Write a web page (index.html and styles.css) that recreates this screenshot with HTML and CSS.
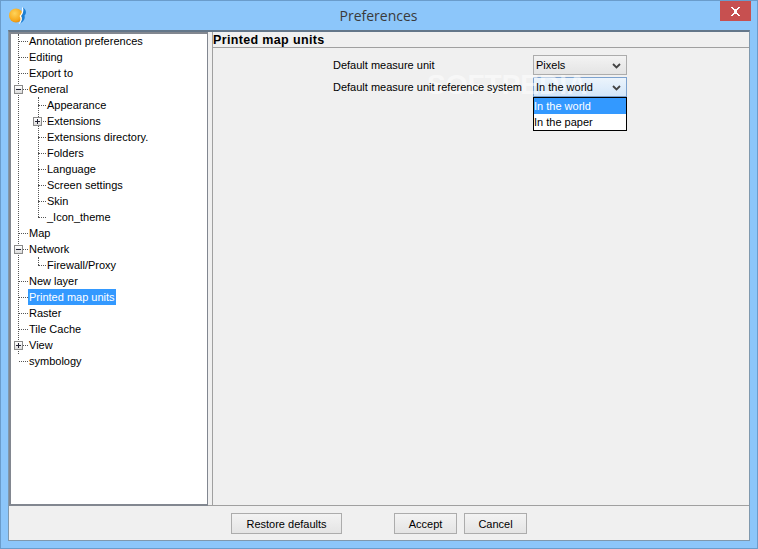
FILE: index.html
```html
<!DOCTYPE html>
<html lang="en">
<head>
<meta charset="utf-8">
<title>Preferences</title>
<link rel="stylesheet" href="styles.css">
</head>
<body>
<div class="window">
  <header class="titlebar">
    <svg class="app-icon" width="18" height="17" viewBox="0 0 18 17">
      <defs>
        <radialGradient id="orb" cx="40%" cy="35%" r="70%">
          <stop offset="0" stop-color="#ffd45a"/>
          <stop offset="0.7" stop-color="#f7aa1e"/>
          <stop offset="1" stop-color="#e08a10"/>
        </radialGradient>
      </defs>
      <circle cx="7" cy="8.500" r="7" fill="url(#orb)"/>
      <path d="M14 .5 C17.500 3 17.800 6.500 15.500 8.500 C16.500 11.500 14.500 15 11 16.500 C13 13.500 13.500 11 12 9 C14 7 14.800 4 14 .5Z" fill="#1b7fd4"/>
      <path d="M13 .5 L14 .5 C14.800 4 14 7 12 9 C13.500 11 13 13.500 11 16.500 L9.500 16.800 C12 14 12 11 10.500 9 C12.800 7 13.500 4 13 .5Z" fill="#fff"/>
    </svg>
    <h1 class="title">Preferences</h1>
    <button class="close" aria-label="Close">
      <svg width="11" height="9" viewBox="0 0 11 9"><path d="M1 0h2v1h1v1h3V1h1V0h2v1H9v1H8v1H7v3h1v1h1v1h1v1H8V8H7V7H4v1H3v1H1V8h1V7h1V6h1V3H3V2H2V1H1Z" fill="#fff"/></svg>
    </button>
  </header>
  <main class="client">
    <div class="panes">
      <nav class="tree">
        <ul class="nodes root">
          <li class="node"><span class="label">Annotation preferences</span></li>
          <li class="node"><span class="label">Editing</span></li>
          <li class="node"><span class="label">Export to</span></li>
          <li class="node"><i class="toggle minus"></i><span class="label">General</span></li>
          <li>
            <ul class="nodes sub long">
              <li class="node"><span class="label">Appearance</span></li>
              <li class="node"><i class="toggle plus"></i><span class="label">Extensions</span></li>
              <li class="node"><span class="label">Extensions directory.</span></li>
              <li class="node"><span class="label">Folders</span></li>
              <li class="node"><span class="label">Language</span></li>
              <li class="node"><span class="label">Screen settings</span></li>
              <li class="node"><span class="label">Skin</span></li>
              <li class="node"><span class="label">_Icon_theme</span></li>
            </ul>
          </li>
          <li class="node"><span class="label">Map</span></li>
          <li class="node"><i class="toggle minus"></i><span class="label">Network</span></li>
          <li>
            <ul class="nodes sub">
              <li class="node"><span class="label">Firewall/Proxy</span></li>
            </ul>
          </li>
          <li class="node"><span class="label">New layer</span></li>
          <li class="node"><span class="label selected">Printed map units</span></li>
          <li class="node"><span class="label">Raster</span></li>
          <li class="node"><span class="label">Tile Cache</span></li>
          <li class="node"><i class="toggle plus"></i><span class="label">View</span></li>
          <li class="node"><span class="label">symbology</span></li>
        </ul>
      </nav>
      <section class="page">
        <h2 class="page-title">Printed map units</h2>
        <div class="form">
          <div class="field">
            <span class="field-label">Default measure unit</span>
            <div class="combo"><span class="combo-text">Pixels</span><svg class="chev" width="9" height="6" viewBox="0 0 9 6"><path d="M1 1l3.500 3.500L8 1" fill="none" stroke="#444" stroke-width="1.800"/></svg></div>
          </div>
          <div class="field">
            <span class="field-label">Default measure unit reference system</span>
            <div class="combo open"><span class="combo-text">In the world</span><svg class="chev" width="9" height="6" viewBox="0 0 9 6"><path d="M1 1l3.500 3.500L8 1" fill="none" stroke="#444" stroke-width="1.800"/></svg>
              <ul class="popup">
                <li class="option active">In the world</li>
                <li class="option">In the paper</li>
              </ul>
            </div>
          </div>
          <span class="watermark">SOFTPEDIA</span>
        </div>
      </section>
    </div>
    <footer class="actions">
      <button class="btn restore">Restore defaults</button>
      <button class="btn accept">Accept</button>
      <button class="btn">Cancel</button>
    </footer>
  </main>
</div>
</body>
</html>
```
FILE: styles.css
```css
* { box-sizing: border-box; }
html, body { margin: 0; padding: 0; }
body { width: 758px; height: 549px; overflow: hidden; font: 11px/16px "Liberation Sans", sans-serif; color: #000; }
ul { list-style: none; margin: 0; padding: 0; }

.window {
  width: 758px; height: 549px;
  display: flex; flex-direction: column;
  background: #8cc6fa;
  border: 1px solid #6a9ccb;
  padding: 0 7px 7px;
}
.titlebar { height: 29px; flex: none; display: flex; align-items: flex-start; position: relative; }
.app-icon { position: absolute; left: 1px; top: 6px; }
.title { margin: 0; flex: 1; text-align: center; font: 400 14px/30px "Open Sans", sans-serif; color: #3a3a3a; padding-right: 1px; }
.close {
  position: absolute; right: -1px; top: 0;
  width: 31px; height: 20px;
  border: 0; padding: 0; background: #c75050;
  display: flex; align-items: center; justify-content: center;
}

.client {
  flex: 1; min-height: 0;
  display: flex; flex-direction: column;
  background: #f0f0f0;
  border: 1px solid #7f98ad;
  border-top: 2px solid #64778a;
}
.panes { flex: 1; min-height: 0; display: flex; border-bottom: 1px solid #a0a0a0; }
.tree {
  width: 199px; height: 474px; flex: none;
  background: #fff;
  border: 2px solid #828790;
  border-right-width: 1px; border-top-width: 2px;
}

.nodes { position: relative; }
.root { padding-left: 17px; margin-top: -1px; }
.root::before, .sub::before {
  content: ""; position: absolute; top: 0; width: 0;
  border-left: 1px dotted #555;
}
.root::before { left: 7px; top: 1px; height: 320px; }
.sub { padding-left: 18px; }
.sub::before { left: 10px; height: 8px; }
.sub.long::before { height: 120px; }
.node { position: relative; height: 16px; }
.node::before {
  content: ""; position: absolute; left: -9px; top: 8px; width: 9px;
  border-top: 1px dotted #555;
}
.sub .node::before { left: -8px; width: 8px; }
.label { display: inline-block; padding: 0 1px; height: 16px; white-space: nowrap; position: relative; }
.selected { background: #3399ff; color: #fff; }
.toggle {
  position: absolute; left: -14px; top: 4px; z-index: 1;
  width: 9px; height: 9px;
  background: linear-gradient(#fff, #dcdcdc);
  border: 1px solid #8a8a8a;
}
.sub .toggle { left: -13px; }
.toggle::before { content: ""; position: absolute; left: 1px; top: 3px; width: 5px; height: 1px; background: #223; }
.plus::after { content: ""; position: absolute; left: 3px; top: 1px; width: 1px; height: 5px; background: #223; }

.page { flex: 1; min-width: 0; margin-left: 4px; border-left: 1px solid #a0a0a0; }
.page-title { margin: 0; height: 15px; font: 700 12.5px/16px "Liberation Sans", sans-serif; letter-spacing: .35px; border-bottom: 1px solid #a0a0a0; box-sizing: content-box; }
.form { position: relative; padding: 7px 0 0 120px; display: flex; flex-direction: column; gap: 2px; }
.field { display: flex; align-items: center; height: 20px; }
.field-label { width: 200px; flex: none; white-space: nowrap; position: relative; z-index: 2; }
.combo {
  position: relative;
  width: 94px; height: 20px; padding-left: 2px;
  display: flex; align-items: center; justify-content: space-between;
  background: linear-gradient(#f3f3f3, #e4e4e4);
  border: 1px solid #acacac;
}
.combo.open { background: linear-gradient(#ecf4fc, #d3e6f9); border-color: #7da2ce; }
.combo-text { position: relative; z-index: 2; }
.chev { margin-right: 5px; margin-top: 2px; position: relative; z-index: 2; }
.popup {
  position: absolute; left: -1px; top: 19px; width: 94px; z-index: 3;
  background: #fff; border: 1px solid #000;
}
.option { height: 16px; white-space: nowrap; }
.active { background: #3399ff; color: #fff; }
.watermark {
  position: absolute; left: 214px; top: 22px; z-index: 1;
  font: 700 28px/30px "Liberation Sans", sans-serif;
  color: rgba(255,255,255,.5);
}

.actions { height: 34px; flex: none; padding-top: 7px; display: flex; align-items: flex-start; padding-left: 222px; }
.btn {
  height: 21px; width: 63px; padding: 0;
  font: 11px/16px "Liberation Sans", sans-serif; color: #000;
  background: linear-gradient(#f3f3f3, #e4e4e4);
  border: 1px solid #acacac;
  margin-right: 7px;
}
.restore { width: 111px; margin-right: 52px; }
```
